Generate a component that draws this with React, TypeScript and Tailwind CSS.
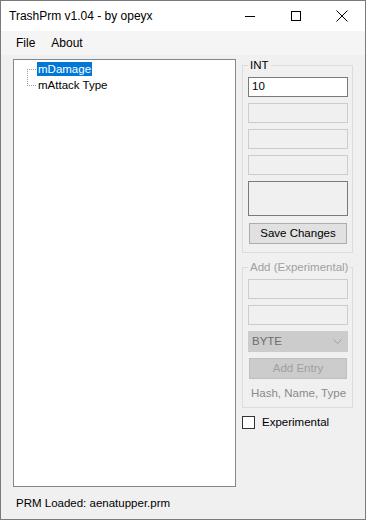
import React from "react";

// WinForms-style window: TrashPrm editor, tree on the left, value editor on the right.

const FONT = { fontFamily: '"Liberation Sans", Arial, sans-serif' };

function TreeRow({ label, first, selected }: { label: string; first?: boolean; selected?: boolean }) {
  return (
    <div className="flex h-[16px] items-center">
      <svg width="10" height="16" className="flex-none" shapeRendering="crispEdges">
        <line x1="0.5" y1={first ? 8 : 0} x2="0.5" y2={first ? 16 : 8} stroke="#a0a0a0" strokeDasharray="1 1" />
        <line x1="0" y1="8.5" x2="10" y2="8.5" stroke="#a0a0a0" strokeDasharray="1 1" />
      </svg>
      <span
        className={`flex h-[14px] items-center whitespace-nowrap px-[1px] leading-[14px] ${
          selected ? "bg-[#0078d7] text-white" : "text-black"
        }`}
      >
        {label}
      </span>
    </div>
  );
}

function Field() {
  return <div className="h-[20px] w-[100px] border border-[#cccccc] bg-[#f0f0f0]" />;
}

export default function App() {
  return (
    <div
      style={FONT}
      className="flex h-[520px] w-[366px] flex-col border border-[#7a7a7a] bg-[#f0f0f0] text-[11.5px] whitespace-nowrap text-black"
    >
      {/* title bar */}
      <div className="flex h-[30px] flex-none items-center bg-white">
        <span className="ml-[8px] flex-1 text-[12px]">TrashPrm v1.04 - by opeyx</span>
        <div className="flex h-full items-center">
          <div className="flex h-full w-[46px] items-center justify-center">
            <div className="h-px w-[10px] bg-black" />
          </div>
          <div className="flex h-full w-[46px] items-center justify-center">
            <div className="h-[10px] w-[10px] border border-black" />
          </div>
          <div className="flex h-full w-[46px] items-center justify-center">
            <svg width="12" height="12" viewBox="0 0 12 12">
              <path d="M0.5 0.5 L11.5 11.5 M11.5 0.5 L0.5 11.5" stroke="#000" strokeWidth="1" />
            </svg>
          </div>
        </div>
      </div>

      {/* menu */}
      <div className="flex h-[24px] flex-none items-center gap-[16px] bg-[#f5f5f5] pl-[15px] text-[12px]">
        <span>File</span>
        <span>About</span>
      </div>

      {/* body */}
      <div className="flex flex-1 pl-[12px]">
        <div className="flex w-[223px] flex-col pt-[4px]">
          <div className="h-[428px] border border-[#828790] bg-white pl-[13px] pt-[1px]">
            <TreeRow label="mDamage" first selected />
            <TreeRow label="mAttack Type" />
          </div>
          <div className="mt-[9px] pl-[3px] leading-[14px]">PRM Loaded: aenatupper.prm</div>
        </div>

        <div className="ml-[6px] flex w-[111px] flex-col pt-[3px]">
          <fieldset className="w-[111px] min-w-0 border border-[#dcdcdc] px-[5px] pb-[8px]">
            <legend className="px-[2px] leading-[14px]">INT</legend>
            <div className="mt-[5px] flex flex-col gap-[6px]">
              <div className="flex h-[20px] w-[100px] items-center border border-[#7a7a7a] bg-white pl-[3px]">10</div>
              <Field />
              <Field />
              <Field />
              <div className="h-[35px] w-[100px] border border-[#7a7a7a] bg-[#f0f0f0]" />
              <div className="ml-[1px] mt-[1px] flex h-[21px] w-[98px] items-center justify-center border border-[#adadad] bg-[#e1e1e1]">
                Save Changes
              </div>
            </div>
          </fieldset>

          <fieldset className="mt-[7px] w-[111px] min-w-0 border border-[#dcdcdc] px-[5px] pb-[7px]">
            <legend className="px-[2px] leading-[14px] text-[#a0a0a0]">Add (Experimental)</legend>
            <div className="mt-[5px] flex flex-col gap-[6px]">
              <Field />
              <Field />
              <div className="flex h-[21px] w-[100px] items-center justify-between border border-[#cccccc] bg-[#cccccc] pl-[3px] pr-[5px] text-[#6d6d6d]">
                <span>BYTE</span>
                <svg width="9" height="5" viewBox="0 0 9 5">
                  <path d="M0.5 0.5 L4.5 4.5 L8.5 0.5" fill="none" stroke="#a0a0a0" />
                </svg>
              </div>
              <div className="ml-[1px] flex h-[21px] w-[98px] items-center justify-center border border-[#bfbfbf] bg-[#cccccc] text-[#a0a0a0]">
                Add Entry
              </div>
              <div className="mt-[1px] pl-[3px] leading-[14px] text-[#8a8a8a]">Hash, Name, Type</div>
            </div>
          </fieldset>

          <div className="mt-[6px] flex items-center gap-[7px]">
            <div className="h-[13px] w-[13px] border border-[#333333] bg-white" />
            <span>Experimental</span>
          </div>
        </div>
      </div>
    </div>
  );
}
